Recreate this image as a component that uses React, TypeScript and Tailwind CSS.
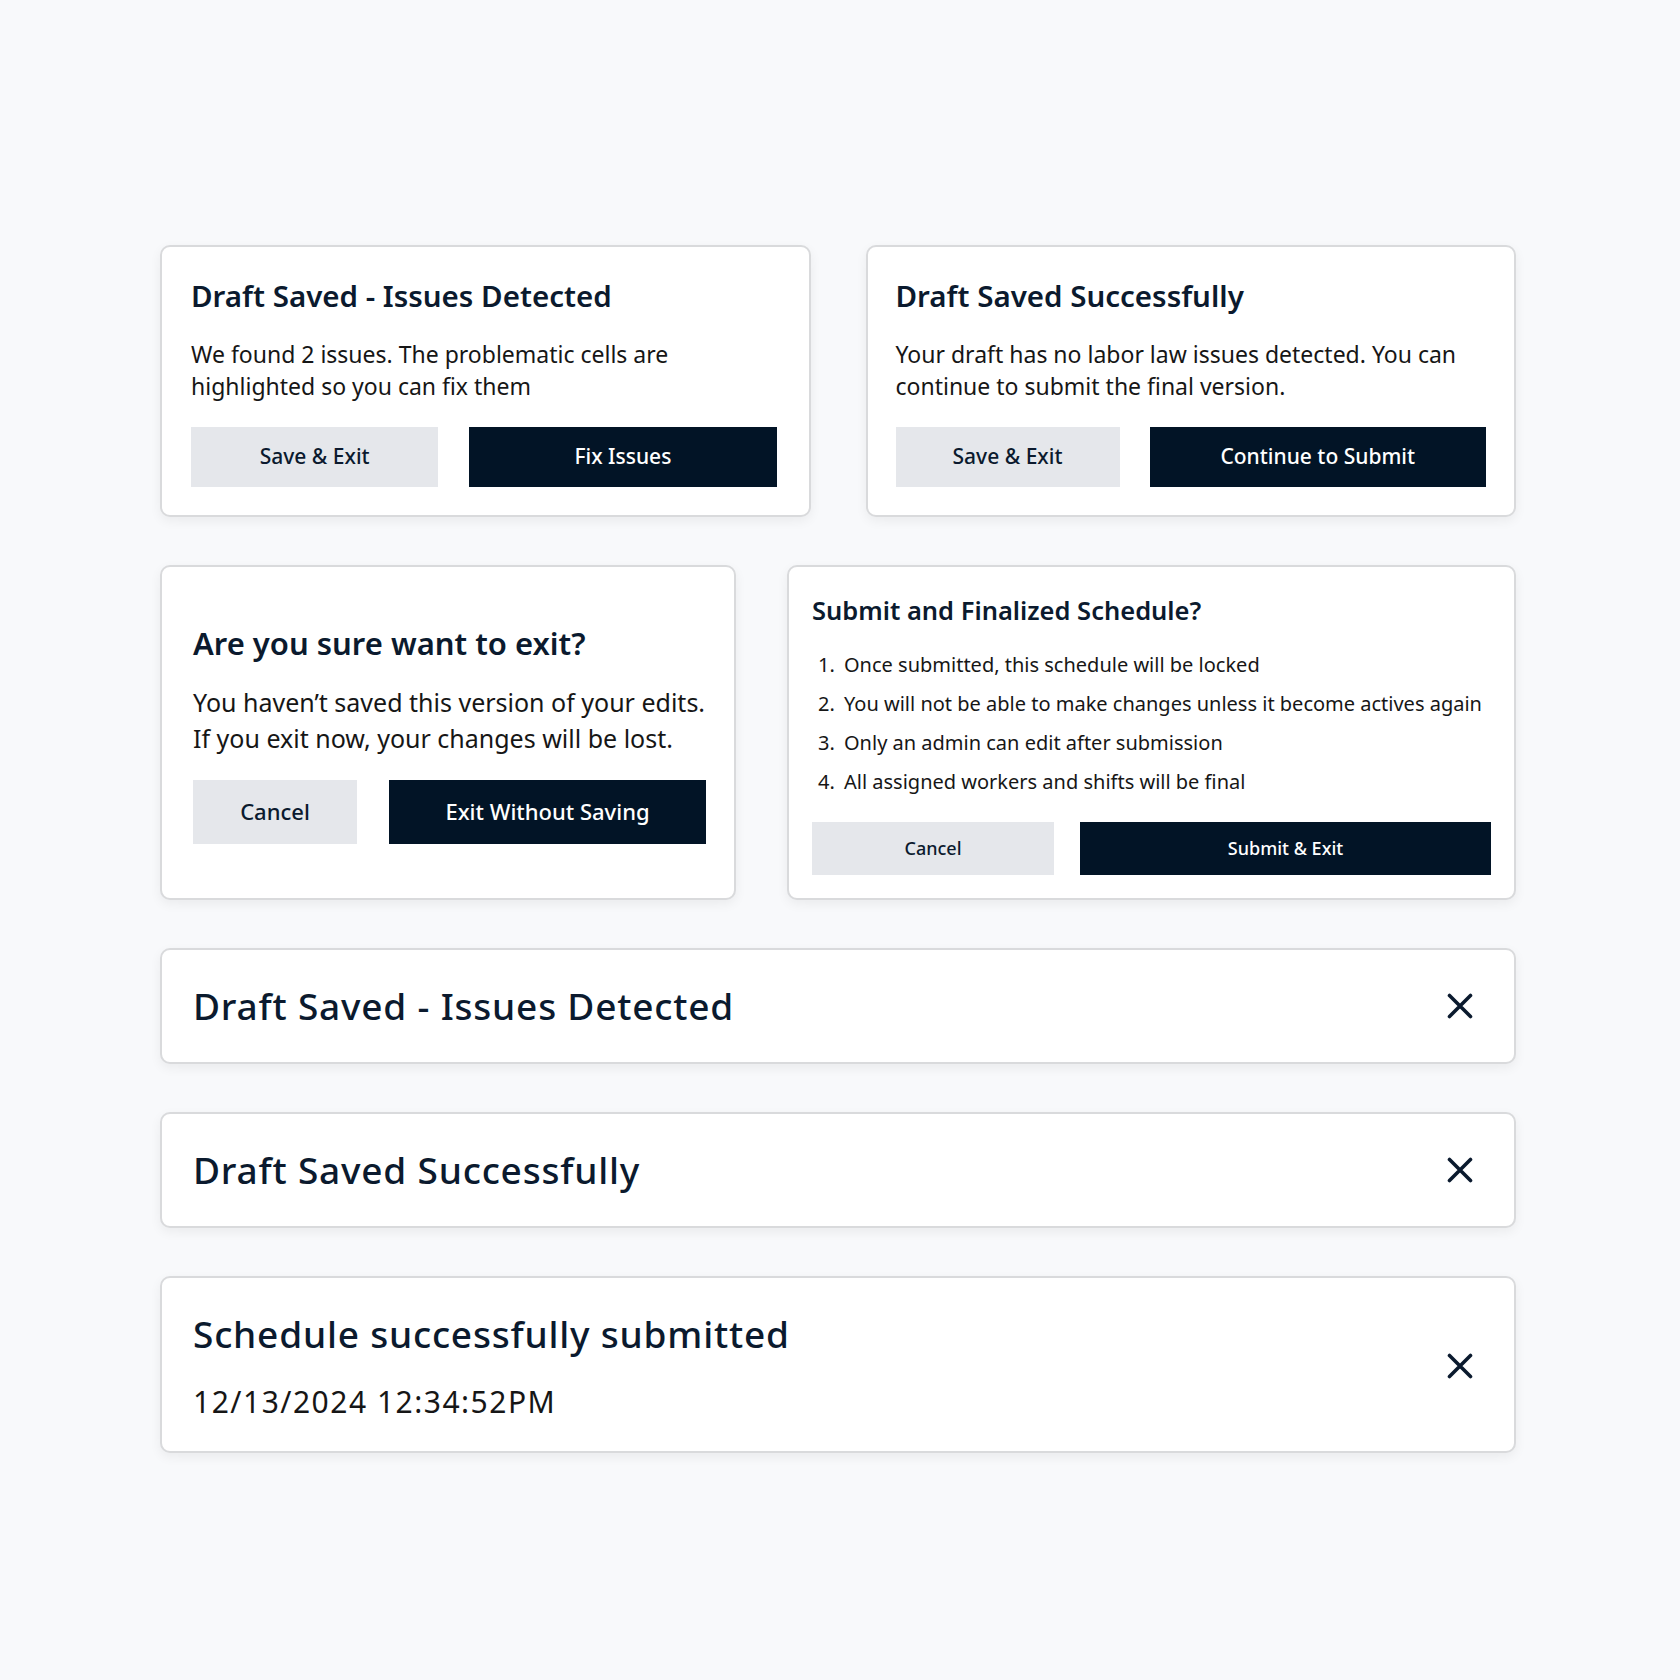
import React from 'react';

const font = { fontFamily: '"Noto Sans", Roboto, sans-serif' };

function CloseIcon() {
  return (
    <svg width="26" height="26" viewBox="0 0 26 26" fill="none" className="shrink-0">
      <path d="M2.5 2.5L23.5 23.5M23.5 2.5L2.5 23.5" stroke="#0b1a2e" strokeWidth="3.6" strokeLinecap="round" />
    </svg>
  );
}

function Banner({ title, sub }: { title: string; sub?: string }) {
  return (
    <div
      className={`flex items-center justify-between bg-white border-2 border-[#d9dadc] rounded-[10px] shadow-[0_4px_12px_rgba(0,0,0,0.06)] pl-[31px] pr-[41px] ${
        sub ? 'pt-[34px] pb-[31px]' : 'py-[34px]'
      }`}
    >
      <div className="flex flex-col gap-[28px]">
        <div className="text-[37px] leading-[44px] font-medium tracking-[0.8px] text-[#0b1a2e]">{title}</div>
        {sub && <div className="text-[30px] leading-[36px] tracking-[1.5px] text-[#161616]">{sub}</div>}
      </div>
      <CloseIcon />
    </div>
  );
}

export default function App() {
  return (
    <div className="min-h-screen bg-[#f8f9fb] pt-[245px] pb-[200px]" style={font}>
      <div className="w-[1356px] ml-[160px] flex flex-col gap-[48px]">
        {/* top row */}
        <div className="grid grid-cols-2 gap-[55px]">
          <div className="bg-white border-2 border-[#d9dadc] rounded-[10px] shadow-[0_4px_12px_rgba(0,0,0,0.06)] pl-[29px] pr-[32px] pt-[31px] pb-[28px]">
            <h2 className="text-[29.5px] leading-[36px] font-semibold text-[#0b1a2e]">Draft Saved - Issues Detected</h2>
            <p className="mt-[24px] text-[23px] leading-[32px] text-[#161616]">
              We found 2 issues. The problematic cells are highlighted so you can fix them
            </p>
            <div className="mt-[25px] flex gap-[31px]">
              <button className="w-[248px] h-[60px] bg-[#e5e7eb] text-[#0b1a2e] text-[21px] font-medium">Save &amp; Exit</button>
              <button className="w-[308px] h-[60px] bg-[#021426] text-white text-[21px] font-medium">Fix Issues</button>
            </div>
          </div>
          <div className="bg-white border-2 border-[#d9dadc] rounded-[10px] shadow-[0_4px_12px_rgba(0,0,0,0.06)] pl-[28px] pr-[28px] pt-[31px] pb-[28px]">
            <h2 className="text-[29.5px] leading-[36px] font-semibold text-[#0b1a2e]">Draft Saved Successfully</h2>
            <p className="mt-[24px] text-[23px] leading-[32px] text-[#161616]">
              Your draft has no labor law issues detected. You can continue to submit the final version.
            </p>
            <div className="mt-[25px] flex gap-[30px]">
              <button className="w-[224px] h-[60px] bg-[#e5e7eb] text-[#0b1a2e] text-[21px] font-medium">Save &amp; Exit</button>
              <button className="flex-1 h-[60px] bg-[#021426] text-white text-[21px] font-medium">Continue to Submit</button>
            </div>
          </div>
        </div>

        {/* middle row */}
        <div className="flex gap-[51px] items-stretch">
          <div className="w-[576px] shrink-0 flex flex-col justify-center bg-white border-2 border-[#d9dadc] rounded-[10px] shadow-[0_4px_12px_rgba(0,0,0,0.06)] pl-[31px] pr-[24px] pt-[2px]">
            <h2 className="text-[31px] leading-[38px] font-semibold text-[#0b1a2e]">Are you sure want to exit?</h2>
            <p className="mt-[22px] text-[25px] leading-[36px] text-[#161616]">
              You haven’t saved this version of your edits. If you exit now, your changes will be lost.
            </p>
            <div className="mt-[24px] flex gap-[32px]">
              <button className="w-[164px] h-[64px] bg-[#e5e7eb] text-[#0b1a2e] text-[22px] font-medium">Cancel</button>
              <button className="w-[317px] h-[64px] bg-[#021426] text-white text-[22px] font-medium">Exit Without Saving</button>
            </div>
          </div>
          <div className="flex-1 bg-white border-2 border-[#d9dadc] rounded-[10px] shadow-[0_4px_12px_rgba(0,0,0,0.06)] pl-[23px] pr-[23px] pt-[27px] pb-[23px]">
            <h2 className="text-[25.5px] leading-[32px] font-semibold text-[#0b1a2e]">Submit and Finalized Schedule?</h2>
            <ol className="mt-[25px] list-decimal pl-[28px] flex flex-col gap-[11px] text-[20px] leading-[28px] text-[#161616]">
              <li className="pl-[4px]">Once submitted, this schedule will be locked</li>
              <li className="pl-[4px]">You will not be able to make changes unless it become actives again</li>
              <li className="pl-[4px]">Only an admin can edit after submission</li>
              <li className="pl-[4px]">All assigned workers and shifts will be final</li>
            </ol>
            <div className="mt-[26px] flex gap-[26px]">
              <button className="w-[242px] h-[53px] bg-[#e5e7eb] text-[#0b1a2e] text-[18px] font-medium">Cancel</button>
              <button className="flex-1 h-[53px] bg-[#021426] text-white text-[18px] font-medium">Submit &amp; Exit</button>
            </div>
          </div>
        </div>

        {/* banners */}
        <Banner title="Draft Saved - Issues Detected" />
        <Banner title="Draft Saved Successfully" />
        <Banner title="Schedule successfully submitted" sub="12/13/2024 12:34:52PM" />
      </div>
    </div>
  );
}
